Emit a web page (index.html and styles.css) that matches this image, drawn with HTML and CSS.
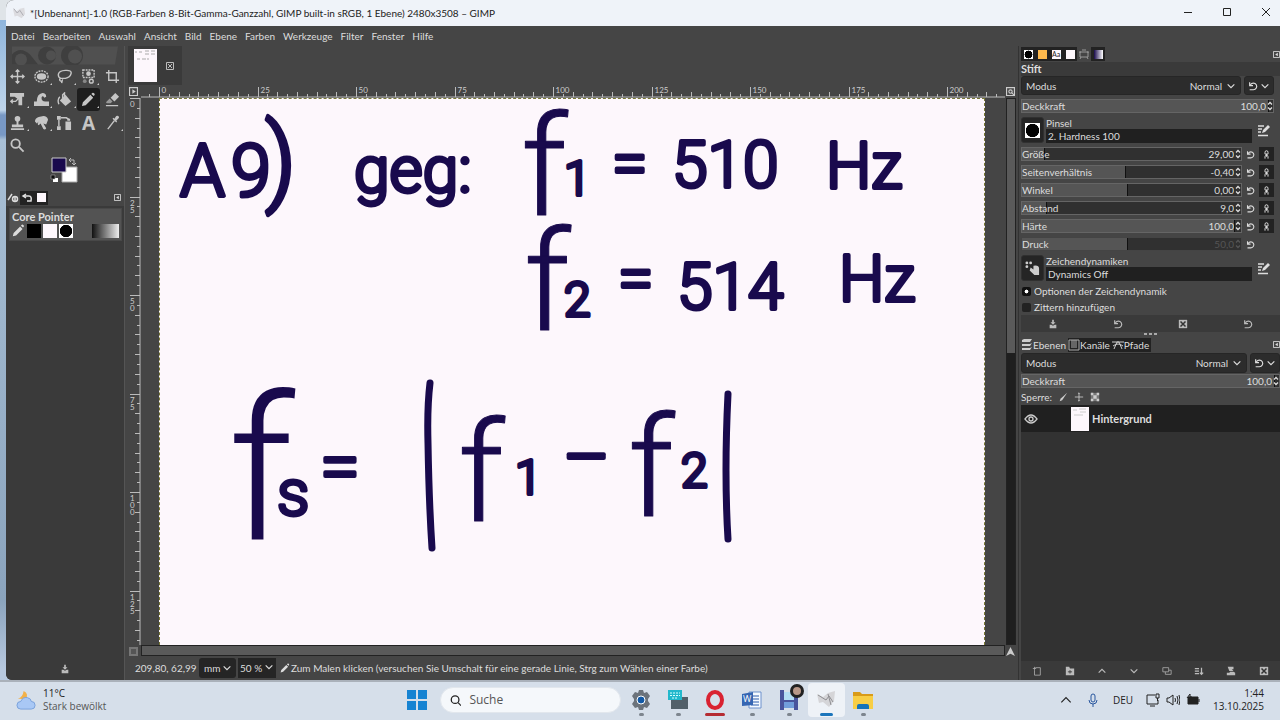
FILE: index.html
```
<!DOCTYPE html>
<html lang="de">
<head>
  <meta charset="UTF-8">
  <title>*[Unbenannt]-1.0 – GIMP</title>
  <link rel="stylesheet" href="styles.css">
</head>
<body>
  <!-- mehrfach verwendete Icons -->
  <svg class="defs">
    <symbol id="reset" viewBox="0 0 12 12"><path d="M2 10.500h4.500a4 4 0 1 0-3.500-6M2 1.500v4h4" fill="none" stroke="currentColor" stroke-width="1.400"/></symbol>
    <symbol id="down" viewBox="0 0 12 12"><path d="M2 4l4 4 4-4" fill="none" stroke="currentColor" stroke-width="1.400"/></symbol>
    <symbol id="up" viewBox="0 0 12 12"><path d="M2 8l4-4 4 4" fill="none" stroke="currentColor" stroke-width="1.400"/></symbol>
    <symbol id="spin" viewBox="0 0 6 12"><path d="M1 4.500l2-2 2 2M1 7.500l2 2 2-2" fill="none" stroke="currentColor" stroke-width="1.300"/></symbol>
    <symbol id="link" viewBox="0 0 12 12"><path d="M4 5.500V3a2 2 0 0 1 4 0v2.500H4zM4 11.500V9a2 2 0 0 1 4 0v2.500M6 5v4" fill="none" stroke="currentColor" stroke-width="1.300"/></symbol>
    <symbol id="edit" viewBox="0 0 14 14"><path d="M1 3h6M1 6h4M1 9h3M1 12.500h10" stroke="currentColor" stroke-width="1.300"/><path d="M5 10l1-3 5-5 2 2-5 5z" fill="currentColor"/></symbol>
    <symbol id="menu" viewBox="0 0 8 8"><path d="M.5.5h7v7h-7z" fill="none" stroke="currentColor"/><path d="M5.500 2v4l-3-2z" fill="currentColor"/></symbol>
    <symbol id="pencil" viewBox="0 0 16 16"><path d="M1 15l1-4 8-8 3 3-8 8zM11 2l1-1q1-.6 2 .3t.5 2l-1 1z" fill="currentColor"/></symbol>
    <symbol id="cross" viewBox="0 0 12 12"><path d="M1 1h10v10H1z" fill="currentColor"/><path d="M3 3l6 6M9 3l-6 6" stroke="#333" stroke-width="1.800"/></symbol>
    <symbol id="save" viewBox="0 0 12 12"><path d="M5 1h2v3h2L6 7 3 4h2zM2 7h2l2 1 2-1h2v4H2z" fill="currentColor"/></symbol>
  </svg>

  <div class="window">
    <header class="titlebar">
      <svg class="app-icon" viewBox="0 0 16 16"><path d="M1 3l4 3 4-3 5-1 1 7-4 5-5-3-3 1z" fill="#dcdce0"/><path d="M2 3l4 5 3-3 4 6" stroke="#a5a5ac" fill="none"/></svg>
      <h1>*[Unbenannt]-1.0 (RGB-Farben 8-Bit-Gamma-Ganzzahl, GIMP built-in sRGB, 1 Ebene) 2480x3508 – GIMP</h1>
      <div class="caption">
        <button aria-label="Minimieren"><svg viewBox="0 0 10 10"><path d="M1 5.500h8"/></svg></button>
        <button aria-label="Maximieren"><svg viewBox="0 0 10 10"><path d="M1.500 1.500h7v7h-7z"/></svg></button>
        <button aria-label="Schließen"><svg viewBox="0 0 10 10"><path d="M1 1l8 8M9 1L1 9"/></svg></button>
      </div>
    </header>

    <nav class="menubar">
      <button>Datei</button><button>Bearbeiten</button><button>Auswahl</button><button>Ansicht</button><button>Bild</button><button>Ebene</button><button>Farben</button><button>Werkzeuge</button><button>Filter</button><button>Fenster</button><button>Hilfe</button>
    </nav>

    <main class="workspace">
      <!-- Werkzeugkasten -->
      <aside class="toolbox">
        <svg class="wilber" viewBox="0 0 106 18"><path d="M0 0h106l-3 18H0z" fill="#505050"/><g fill="#3f3f3f"><path d="M0 18V8q8-9 18 0l8 10z"/><circle cx="35" cy="9" r="9"/><circle cx="60" cy="9" r="11"/></g><g fill="#505050"><circle cx="9" cy="13" r="6"/><circle cx="39" cy="9" r="5"/><circle cx="63" cy="10" r="7"/></g></svg>
        <div class="tools">
          <button aria-label="Verschieben"><svg viewBox="0 0 16 16"><path d="M8 1v14M1 8h14M6 3l2-2 2 2M6 13l2 2 2-2M3 6L1 8l2 2M13 6l2 2-2 2" class="line"/></svg></button>
          <button class="more" aria-label="Auswahl"><svg viewBox="0 0 16 16"><ellipse cx="8" cy="8" rx="5" ry="3.500" fill="currentColor"/><ellipse cx="8" cy="8" rx="7" ry="6" class="line dotted"/></svg></button>
          <button class="more" aria-label="Freie Auswahl"><svg viewBox="0 0 16 16"><path d="M4 10Q1 9 1.500 5.500T9 1.500t6 3.500-6 5H4.500a1.500 1.500 0 1 0 1 2.500L5 15" class="line"/></svg></button>
          <button class="more" aria-label="Zauberstab"><svg viewBox="0 0 16 16"><path d="M2 1h12v8H2z" class="line dotted"/><circle cx="8" cy="5" r="2.500" fill="currentColor"/><circle cx="4" cy="13" r="2" fill="#888"/><circle cx="11" cy="13" r="2" class="line"/></svg></button>
          <button aria-label="Zuschneiden"><svg viewBox="0 0 16 16"><path d="M4 1v11h11M1 4h11v11" class="line"/></svg></button>
          <button class="more" aria-label="Transformation"><svg viewBox="0 0 16 16"><path d="M0 1h15v4h-2v9h-4V8L5 5H0z" fill="currentColor"/><path d="M1 10h5l3-3M3 8l-2 2 2 2" class="line"/></svg></button>
          <button class="more" aria-label="Warpen"><svg viewBox="0 0 16 16"><path d="M0 15v-5h3q0-8 6-9 4 0 4 4l-2 1q-2-3-3 0 0 4 4 4h4v5z" fill="currentColor"/></svg></button>
          <button class="more" aria-label="Füllen"><svg viewBox="0 0 16 16"><path d="M9 3l6 7-6 5-6-6z" fill="currentColor"/><path d="M8 9V1L6 3v4M3 5q-3 3-1 8" class="line"/></svg></button>
          <button class="more active" aria-label="Stift"><svg viewBox="0 0 16 16"><use href="#pencil"/></svg></button>
          <button aria-label="Radierer"><svg viewBox="0 0 16 16"><path d="M11 1l4 4-5 5-4-4z" fill="currentColor"/><path d="M5 7l3 3-2 2H2l-1-1z" fill="#999"/><path d="M1 14.500h13" class="line"/></svg></button>
          <button class="more" aria-label="Klonen"><svg viewBox="0 0 16 16"><circle cx="8" cy="4" r="3" fill="currentColor"/><path d="M7 6h2v4h5v3H2v-3h5zM1 14h14v2H1z" fill="currentColor"/></svg></button>
          <button class="more" aria-label="Verschmieren"><svg viewBox="0 0 16 16"><path d="M1 7q0-4 4-5l5-1q4 0 5 4l-2 5-3-1 3 5q-1 2-3 1L7 9 5 11Q3 10 5 7L3 9z" fill="currentColor"/></svg></button>
          <button aria-label="Pfade"><svg viewBox="0 0 16 16"><path d="M0 1h4v4H0zM0 12h4v4H0zM9 7h6v9H9zM11 4h3v2h-3z" fill="currentColor"/><path d="M2 5v7M4 3h6l3 2" class="line"/></svg></button>
          <button aria-label="Text"><b>A</b></button>
          <button class="more" aria-label="Farbpipette"><svg viewBox="0 0 16 16"><path d="M10 4l2-3q3-1 3 2l-3 3 1 1-1 1-4-4 1-1z" fill="currentColor"/><path d="M10 6l-7 9" class="line"/></svg></button>
          <button aria-label="Vergrößerung"><svg viewBox="0 0 16 16"><circle cx="6" cy="6" r="4.500" class="line thick"/><path d="M9.500 9.500l5 5" class="line thick"/></svg></button>
        </div>
        <svg class="colors" viewBox="0 0 28 26"><path d="M11 10h15v15H11z" fill="#fff" stroke="#aaa"/><path d="M1 1h14v14H1z" fill="#190a4d" stroke="#ccc"/><path d="M2 21h5v4H2z" fill="#fff"/><path d="M0 18h4v4H0z" fill="#111" stroke="#aaa" stroke-width=".6"/><path d="M18 3h5v5M20 1l-2 2 2 2M21 6l2 2 2-2" fill="none" stroke="#bbb"/></svg>
        <div class="tabs pointer-tabs">
          <button aria-label="Gerätestatus"><svg viewBox="0 0 12 12"><path d="M1 8l4-6M8 5v4" class="line"/><circle cx="8" cy="7" r="2.500" class="line"/></svg></button>
          <button class="dark" aria-label="Journal"><svg viewBox="0 0 12 12"><path d="M5 2L2 4l3 2M2 4h6q3 0 2 5H6" class="line"/></svg></button>
          <button class="dark" aria-label="Bilder"><i class="swatch white"></i></button>
          <svg class="menu-icon"><use href="#menu"/></svg>
        </div>
        <section class="pointer">
          <h2>Core Pointer</h2>
          <div class="pointer-row">
            <svg class="icon"><use href="#pencil"/></svg>
            <i class="box black"></i><i class="box white"></i><i class="box brush"></i><i class="box gradient"></i>
          </div>
        </section>
        <svg class="icon toolbox-save"><use href="#save"/></svg>
      </aside>

      <!-- Bildfenster -->
      <section class="document">
        <div class="doc-tabs">
          <div class="doc-tab">
            <svg class="thumb" viewBox="0 0 23 33"><path d="M0 0h23v33H0z" fill="#fdf7fc"/><path d="M1 3h2M5 3h3M11 2h4M17 2h4M11 5h4M17 5h4M3 10h3M8 10h4M13 10h2" stroke="#aaa" stroke-width="1"/></svg>
            <button aria-label="Tab schließen"><svg viewBox="0 0 8 8"><path d="M.5.5h7v7h-7zM2 2l4 4M6 2L2 6"/></svg></button>
          </div>
        </div>
        <div class="view">
          <svg class="corner" viewBox="0 0 8 8"><path d="M.5.5h7v7h-7z" fill="none" stroke="#ccc"/><path d="M3 2v4l3-2z" fill="#ccc"/></svg>
          <svg class="ruler-h" id="rulerH"></svg>
          <svg class="corner" viewBox="0 0 8 8"><path d="M.5.5h7v7h-7z" fill="none" stroke="#ccc"/><circle cx="4" cy="4" r="1.500" fill="none" stroke="#ccc"/><path d="M5 5l2 2" stroke="#ccc"/></svg>
          <svg class="ruler-v" id="rulerV"></svg>
          <div class="canvas">
            <svg class="drawing">
              <g class="hand">
                <text x="20" y="97" class="s72">A</text>
                <text x="71" y="97" class="s72">9</text>
                <text x="105" y="94" class="s96">)</text>
                <text x="194" y="93" class="s64">geg:</text>
                <text x="361" y="116" class="s140">f</text>
                <text x="404" y="96" class="s48">1</text>
                <text x="452" y="86" class="s64">=</text>
                <text x="512" y="88" class="s64">510</text>
                <text x="666" y="89" class="s64">Hz</text>
                <text x="364" y="231" class="s140">f</text>
                <text x="404" y="217" class="s48">2</text>
                <text x="458" y="201" class="s64">=</text>
                <text x="517" y="210" class="s64">514</text>
                <text x="679" y="202" class="s64">Hz</text>
                <text x="68" y="440" class="s200">f</text>
                <text x="117" y="416" class="s64">s</text>
                <text x="160" y="392" class="s72">=</text>
                <text x="298" y="422" class="s140">f</text>
                <text x="355" y="395" class="s48">1</text>
                <text x="403" y="383" class="s72">–</text>
                <text x="468" y="417" class="s140">f</text>
                <text x="521" y="388" class="s48">2</text>
              </g>
              <path d="M270 284q-3 25-2 60 1 60 4 105M568 295q-4 80 0 145" class="bar"/>
            </svg>
          </div>
          <div class="scroll-v"></div>
          <i class="quickmask"></i>
          <div class="scroll-h"></div>
          <svg class="corner" viewBox="0 0 8 8"><path d="M4 0l4 8-4-2-4 2z" fill="#ccc"/></svg>
        </div>
        <footer class="status">
          <output>209,80, 62,99</output>
          <select class="unit" aria-label="Einheit"><option>mm</option></select>
          <div class="zoom"><input type="text" value="50 %" aria-label="Zoom"><button aria-label="Zoomstufen"><svg class="icon"><use href="#down"/></svg></button></div>
          <svg class="icon"><use href="#pencil"/></svg>
          <span>Zum Malen klicken (versuchen Sie Umschalt für eine gerade Linie, Strg zum Wählen einer Farbe)</span>
        </footer>
      </section>

      <!-- Docks rechts -->
      <aside class="dock">
        <section class="options">
          <div class="tabs">
            <button class="dark" aria-label="Pinsel"><i class="swatch brush"></i></button>
            <button class="dark" aria-label="Muster"><i class="swatch orange"></i></button>
            <button class="dark" aria-label="Schriften"><i class="swatch white">Aa</i></button>
            <button class="dark" aria-label="Bilder"><i class="swatch white"></i></button>
            <button aria-label="Werkzeugeinstellungen"><svg viewBox="0 0 12 12"><path d="M2 4h8v5H2zM1 4h2M9 4h2M4 2h4M3 9l-1 2M9 9l1 2" fill="none" stroke="#999"/></svg></button>
            <button class="dark" aria-label="Verläufe"><i class="swatch violet"></i></button>
            <svg class="menu-icon"><use href="#menu"/></svg>
          </div>
          <h2>Stift</h2>
          <div class="body">
            <div class="mode"><div class="combo"><label for="mode">Modus</label><select id="mode"><option>Normal</option></select></div><button class="combo-reset" aria-label="Modusgruppe"><svg class="icon"><use href="#reset"/></svg><svg class="icon"><use href="#down"/></svg></button></div>
            <div class="spin full" style="--fill:98%"><label for="opacity">Deckkraft</label><input id="opacity" type="text" value="100,0"><svg><use href="#spin"/></svg></div>
            <div class="resource">
              <button class="preview" aria-label="Pinsel wählen"><i class="box brush"></i></button>
              <div class="field"><label for="brush">Pinsel</label><input id="brush" type="text" value="2. Hardness 100"></div>
              <button class="edit" aria-label="Pinsel bearbeiten"><svg><use href="#edit"/></svg></button>
            </div>
            <div class="row"><div class="spin" style="--fill:10%"><label for="size">Größe</label><input id="size" type="text" value="29,00"><svg><use href="#spin"/></svg></div><button aria-label="Zurücksetzen"><svg class="icon"><use href="#reset"/></svg></button><button class="link" aria-label="Verknüpfen"><svg class="icon"><use href="#link"/></svg></button></div>
            <div class="row"><div class="spin" style="--fill:47%"><label for="aspect">Seitenverhältnis</label><input id="aspect" type="text" value="-0,40"><svg><use href="#spin"/></svg></div><button aria-label="Zurücksetzen"><svg class="icon"><use href="#reset"/></svg></button><button class="link" aria-label="Verknüpfen"><svg class="icon"><use href="#link"/></svg></button></div>
            <div class="row"><div class="spin" style="--fill:48%"><label for="angle">Winkel</label><input id="angle" type="text" value="0,00"><svg><use href="#spin"/></svg></div><button aria-label="Zurücksetzen"><svg class="icon"><use href="#reset"/></svg></button><button class="link" aria-label="Verknüpfen"><svg class="icon"><use href="#link"/></svg></button></div>
            <div class="row"><div class="spin" style="--fill:11%"><label for="spacing">Abstand</label><input id="spacing" type="text" value="9,0"><svg><use href="#spin"/></svg></div><button aria-label="Zurücksetzen"><svg class="icon"><use href="#reset"/></svg></button><button class="link" aria-label="Verknüpfen"><svg class="icon"><use href="#link"/></svg></button></div>
            <div class="row"><div class="spin" style="--fill:97%"><label for="hardness">Härte</label><input id="hardness" type="text" value="100,0"><svg><use href="#spin"/></svg></div><button aria-label="Zurücksetzen"><svg class="icon"><use href="#reset"/></svg></button><button class="link" aria-label="Verknüpfen"><svg class="icon"><use href="#link"/></svg></button></div>
            <div class="row"><div class="spin disabled" style="--fill:48%"><label for="force">Druck</label><input id="force" type="text" value="50,0" disabled><svg><use href="#spin"/></svg></div><button aria-label="Zurücksetzen"><svg class="icon"><use href="#reset"/></svg></button><i class="blank"></i></div>
            <div class="resource">
              <button class="preview" aria-label="Dynamik wählen"><svg viewBox="0 0 16 16"><path d="M6 7l3 2V5q6-1 6 3v7h-5l-5-5z" fill="#ccc"/><g fill="#ccc"><circle cx="2" cy="2" r="1.500"/><circle cx="6" cy="2" r="1.500"/><circle cx="2" cy="6" r="1.500"/></g></svg></button>
              <div class="field"><label for="dynamics">Zeichendynamiken</label><input id="dynamics" type="text" value="Dynamics Off"></div>
              <button class="edit" aria-label="Dynamik bearbeiten"><svg><use href="#edit"/></svg></button>
            </div>
            <label class="check"><input type="checkbox" class="expander" checked>Optionen der Zeichendynamik</label>
            <label class="check"><input type="checkbox">Zittern hinzufügen</label>
          </div>
          <div class="actions">
            <button aria-label="Speichern"><svg class="icon"><use href="#save"/></svg></button>
            <button aria-label="Wiederherstellen"><svg class="icon"><use href="#reset"/></svg></button>
            <button aria-label="Löschen"><svg class="icon"><use href="#cross"/></svg></button>
            <button aria-label="Zurücksetzen"><svg class="icon"><use href="#reset"/></svg></button>
          </div>
        </section>
        <div class="grip"><i></i><i></i><i></i></div>
        <section class="layers">
          <div class="tabs">
            <button><svg viewBox="0 0 12 12"><path d="M1 1l2-1h8l-2 3H1zM1 5h8l2-1-2 3H1zM1 9h8l2-1-2 3H1z" fill="#ccc"/></svg>Ebenen</button>
            <button class="dark"><svg viewBox="0 0 12 12"><path d="M1 1h10v10H1zM4 1v8M6 1v8M8 1v8" fill="none" stroke="#aaa"/></svg>Kanäle</button>
            <button class="dark"><svg viewBox="0 0 12 12"><path d="M0 3h12M2 10l3-7h2l3 7M1 7q5-4 10 0" fill="none" stroke="#ccc"/></svg>Pfade</button>
            <svg class="menu-icon"><use href="#menu"/></svg>
          </div>
          <div class="mode"><div class="combo"><label for="lmode">Modus</label><select id="lmode"><option>Normal</option></select></div><button class="combo-reset" aria-label="Modusgruppe"><svg class="icon"><use href="#reset"/></svg><svg class="icon"><use href="#down"/></svg></button></div>
          <div class="spin full" style="--fill:98%"><label for="lopacity">Deckkraft</label><input id="lopacity" type="text" value="100,0"><svg><use href="#spin"/></svg></div>
          <div class="lock">Sperre:
            <button aria-label="Pixel sperren"><svg viewBox="0 0 12 12"><path d="M2 11l1-3 8-7-6 9z" fill="#ccc"/></svg></button>
            <button aria-label="Position sperren"><svg viewBox="0 0 12 12"><path d="M6 1v10M1 6h10M5 2l1-1 1 1M5 10l1 1 1-1" fill="none" stroke="#ccc"/></svg></button>
            <button aria-label="Alpha sperren"><svg viewBox="0 0 12 12"><path d="M1 1h10v10H1z" fill="#777"/><path d="M1 1h3v3h4V1h3v3H8v4h3v3H8V8H4v3H1V8h3V4H1z" fill="#ccc"/></svg></button>
          </div>
          <div class="layer">
            <svg class="eye" viewBox="0 0 14 10"><path d="M1 5q6-8 12 0-6 8-12 0z" fill="none" stroke="#ccc" stroke-width="1.300"/><circle cx="7" cy="5" r="2" fill="none" stroke="#ccc" stroke-width="1.300"/></svg>
            <svg class="layer-thumb" viewBox="0 0 18 24"><path d="M0 0h18v24H0z" fill="#fdf7fc"/><path d="M2 3h4M8 2h7M9 5h6M3 8h9" stroke="#ccc"/></svg>
            <b>Hintergrund</b>
          </div>
          <div class="layer-space"></div>
          <div class="actions">
            <button aria-label="Neue Ebene"><svg viewBox="0 0 12 12"><path d="M4 2h6v9H3V5M1 3h4M3 1v4" fill="none" stroke="#aaa"/></svg></button>
            <button aria-label="Neue Gruppe"><svg viewBox="0 0 12 12"><path d="M1 1h4l1 2h5v8H1z" fill="#bbb"/><path d="M3.500 7h5M6 5v4" fill="none" stroke="#333"/></svg></button>
            <button aria-label="Nach oben"><svg class="icon"><use href="#up"/></svg></button>
            <button aria-label="Nach unten"><svg class="icon"><use href="#down"/></svg></button>
            <button aria-label="Duplizieren"><svg viewBox="0 0 12 12"><path d="M1 2h7v5H1zM4 7v3h7V5H8" fill="none" stroke="#aaa"/></svg></button>
            <button aria-label="Zusammenfügen"><svg viewBox="0 0 12 12"><path d="M1 3h5M1 6h5M1 9h5M9 2v8M7 8l2 2 2-2" fill="none" stroke="#bbb" stroke-width="1.500"/></svg></button>
            <button aria-label="Maske"><svg viewBox="0 0 12 12"><path d="M2 1h7v3H7l2 2H4zM1 8h3l1-1h4l2 1v3H1z" fill="#bbb"/></svg></button>
            <button aria-label="Löschen"><svg class="icon"><use href="#cross"/></svg></button>
          </div>
        </section>
      </aside>
    </main>
  </div>

  <footer class="taskbar">
    <button class="weather">
      <svg viewBox="0 0 22 22"><path d="M8 1q6 3 2 9l-8-1Q7 8 8 1z" fill="#f2b14a"/><path d="M5 20a4 4 0 0 1 0-8q2-5 7-4 4 1 4 4a4 4 0 0 1 0 8z" fill="#a9c8f5" stroke="#789fda"/></svg>
      <span>11°C<small>Stark bewölkt</small></span>
    </button>
    <div class="apps">
      <button aria-label="Start"><svg viewBox="0 0 20 20"><path d="M0 0h9v9H0zM11 0h9v9h-9zM0 11h9v9H0zM11 11h9v9h-9z" fill="#1683d2"/></svg></button>
      <label class="search"><svg viewBox="0 0 14 14"><circle cx="6" cy="6" r="4.500"/><path d="M9.500 9.500L13 13"/></svg><input type="text" placeholder="Suche" aria-label="Suche"></label>
      <button class="run" aria-label="Einstellungen"><svg viewBox="0 0 20 20"><path d="M8 0h4l1 3 3-1 3 4-2 3v2l2 3-3 4-3-1-1 3H8l-1-3-3 1-3-4 2-3V9L1 6l3-4 3 1z" fill="#6c737b"/><circle cx="10" cy="10" r="4" fill="#1359a5" stroke="#fff"/></svg></button>
      <button class="run" aria-label="Bildschirmtastatur"><svg viewBox="0 0 20 20"><path d="M3 7h17v12H3z" fill="#52606a"/><path d="M0 0h14v10H0z" fill="#22b8cc"/><path d="M2 3h10M2 5.500h10M4 8h6" stroke="#d8ffff" stroke-dasharray="2 1"/></svg></button>
      <button class="run red" aria-label="Opera"><svg viewBox="0 0 20 20"><ellipse cx="10" cy="10" rx="7" ry="8" fill="none" stroke="#d92231" stroke-width="4"/></svg></button>
      <button class="run" aria-label="Word"><svg viewBox="0 0 20 20"><path d="M7 2h12v16H7z" fill="#f5faff" stroke="#6d91cc"/><path d="M11 6h6M11 9h6M11 12h6M9 15h8" stroke="#2c5cac"/><path d="M0 4l11-2v13L0 16z" fill="#3566b3"/><text x="1" y="12" font-size="9" fill="#fff">W</text></svg></button>
      <button class="run" aria-label="Editor"><svg viewBox="0 0 20 20"><path d="M1 0h4v8h10V0h4v20h-4v-4H5v4H1z" fill="#49539c"/><path d="M5 2h10v8H5z" fill="#b4dcf4"/><path d="M5 12h10v6H5z" fill="#719ddb"/></svg><i class="badge"></i></button>
      <button class="run current" aria-label="GIMP"><svg viewBox="0 0 20 20"><path d="M1 4l6 3 5-4 7-2-1 10-5 6-6-5-4 1z" fill="#d5d5d8"/><path d="M2 5l8 5 3-4 4 6M12 4l3 11" stroke="#8e8e92" fill="none"/></svg></button>
      <button class="run" aria-label="Explorer"><svg viewBox="0 0 20 20"><path d="M0 2h7l2 2h11v15H0z" fill="#d99b19"/><path d="M0 6h20v13H0z" fill="#f8ce45"/><path d="M4 19v-3q0-2 2-2h8q2 0 2 2v3z" fill="#1673b8"/></svg></button>
    </div>
    <div class="tray">
      <button aria-label="Ausgeblendete Symbole"><svg viewBox="0 0 12 12"><path d="M2 8l4-4 4 4"/></svg></button>
      <button class="mic" aria-label="Mikrofon"><svg viewBox="0 0 14 14"><path d="M7 1q2 0 2 2v4q0 2-2 2T5 7V3q0-2 2-2zM3 7q0 4 4 4t4-4M7 11v3"/></svg></button>
      <button class="lang">DEU</button>
      <button class="system" aria-label="Netzwerk, Lautstärke, Akku">
        <svg viewBox="0 0 14 14"><path d="M9 2H1v9h11V7M4 13h5M10 1h3v4h-3zM11.500 5v3"/></svg>
        <svg viewBox="0 0 14 14"><path d="M1 5h2l4-3v10L3 9H1zM9 5q1 2 0 4M11 3q2 4 0 8M13 2q2 5 0 10"/></svg>
        <svg viewBox="0 0 14 14"><path d="M2 4h10v7H2z" fill="#222"/><path d="M13 6v3M1 5l3-4v3h2L2 8"/></svg>
      </button>
      <time>1:44<br>13.10.2025</time>
    </div>
  </footer>
  <script src="rulers.js"></script>
</body>
</html>
```
FILE: styles.css
```
* {
  box-sizing: border-box;
}
body {
  margin: 0;
  height: 100vh;
  display: flex;
  flex-direction: column;
  background: linear-gradient(#dfe4e8 20px, #8fb5dc 20px, #bfd5ea 110px, #7898c4 115px, #7898c4 135px, #a9c0d6 140px, #8ba4bd 600px, #b8c9df 670px);
  font-family: Lato, "Noto Sans", sans-serif;
  font-size: 10px;
  line-height: 14px;
  color: #ddd;
  overflow: hidden;
}
button, input, select {
  font: inherit;
  color: inherit;
  background: none;
  border: 0;
  padding: 0;
  margin: 0;
  border-radius: 0;
}
input {
  min-width: 0;
}
h1, h2 {
  margin: 0;
  font-size: 11px;
}
.defs {
  display: none;
}
.icon {
  width: 10px;
  height: 10px;
  flex: none;
}
.line {
  fill: none;
  stroke: currentColor;
  stroke-width: 1.5;
}
.dotted {
  stroke-dasharray: 2 1;
}
.thick {
  stroke-width: 2;
}

/* Fenster */
.window {
  flex: 1;
  min-height: 0;
  margin-left: 6px;
  display: flex;
  flex-direction: column;
  background: #454545;
  border-radius: 8px 0 0 6px;
  overflow: hidden;
}
.titlebar {
  height: 26px;
  display: flex;
  align-items: center;
  gap: 4px;
  padding-left: 6px;
  background: #eff3f9;
  color: #222;
}
.titlebar h1 {
  flex: 1;
  font-size: 10px;
  font-weight: normal;
}
.app-icon {
  width: 14px;
  height: 14px;
}
.caption {
  display: flex;
  gap: 11px;
}
.caption button {
  width: 28px;
  height: 26px;
}
.caption svg {
  width: 10px;
  height: 10px;
  fill: none;
  stroke: #222;
}
.menubar {
  height: 20px;
  display: flex;
  gap: 8px;
  padding-left: 5px;
}

.workspace {
  flex: 1;
  min-height: 0;
  display: grid;
  grid-template-columns: 118px 1fr 262px;
}

/* Werkzeugkasten */
.toolbox {
  display: flex;
  flex-direction: column;
  background: #3a3a3a;
}
.wilber {
  height: 19px;
  padding: 0 6px;
  background: #454545;
}
.tools {
  display: grid;
  grid-template-columns: repeat(5, 1fr);
  background: #454545;
}
.tools button {
  position: relative;
  height: 23px;
  display: grid;
  place-items: center;
  color: #c6c6c6;
  border-radius: 3px;
}
.tools svg {
  width: 15px;
  height: 15px;
}
.tools b {
  font-family: "Open Sans", sans-serif;
  font-size: 19px;
}
.tools .active {
  background: #1e1e1e;
}
.more::after {
  content: "";
  position: absolute;
  right: 1px;
  bottom: 3px;
  border: 1px solid #ccc;
  border-top-color: transparent;
  border-left-color: transparent;
}
.colors {
  height: 32px;
  padding-bottom: 6px;
  background: #454545;
}
.tabs {
  display: flex;
  align-items: center;
  height: 16px;
}
.tabs button {
  height: 14px;
  min-width: 14px;
  display: flex;
  align-items: center;
  justify-content: center;
}
.tabs button svg {
  width: 12px;
  height: 12px;
}
.dark {
  background: #222;
}
.tabs .menu-icon {
  width: 7px;
  height: 7px;
  margin-left: auto;
}
.pointer-tabs {
  height: 17px;
  padding-right: 3px;
  background: #454545;
}
.swatch {
  width: 9px;
  height: 9px;
  font-size: 7px;
  font-style: normal;
  line-height: 9px;
  color: #222;
}
.white {
  background: #fdf7fc;
}
.black {
  background: #000;
}
.brush {
  background: radial-gradient(circle, #000 60%, #fff 65%);
}
.orange {
  background: #fdb94d;
}
.violet {
  background: linear-gradient(90deg, #190a4d, #fff);
}
.pointer {
  margin: 2px 2px 0 3px;
  padding: 1px 2px;
  height: 33px;
  background: #535353;
  border: 1px solid #484848;
}
.pointer h2 {
  line-height: 13px;
}
.pointer-row {
  display: flex;
  gap: 2px;
  padding-top: 1px;
}
.pointer-row .icon {
  width: 13px;
  height: 13px;
}
.box {
  width: 14px;
  height: 14px;
}
.gradient {
  width: 27px;
  margin-left: auto;
  background: linear-gradient(90deg, #111, #eee);
}
.toolbox-save {
  margin: auto auto 6px;
  color: #bbb;
}

/* Bildfenster */
.document {
  display: flex;
  flex-direction: column;
  min-width: 0;
  padding-left: 3px;
  border-left: 1px solid #555;
}
.doc-tabs {
  height: 39px;
  display: flex;
}
.doc-tab {
  width: 54px;
  display: flex;
  align-items: center;
  gap: 9px;
  padding-left: 6px;
  background: #3a3a3a;
}
.thumb {
  width: 23px;
  height: 33px;
}
.doc-tab button {
  display: flex;
}
.doc-tab button svg {
  width: 8px;
  height: 8px;
  fill: none;
  stroke: #bbb;
}
.view {
  flex: 1;
  min-height: 0;
  display: grid;
  grid-template-columns: 13px 1fr 13px;
  grid-template-rows: 13px 1fr 11px;
}
.corner, .quickmask {
  width: 9px;
  height: 9px;
  margin: 2px 1px;
}
.quickmask {
  border: 2px solid #777;
  background: #555;
}
.ruler-h {
  width: 100%;
  height: 13px;
}
.ruler-v {
  width: 13px;
  height: 100%;
}
.ruler-h text, .ruler-v text {
  font-size: 8px;
  fill: #ccc;
}
.tick {
  stroke: #bbb;
}
.canvas {
  min-height: 0;
  padding: 0 20px 0 18px;
}
.drawing {
  display: block;
  width: 100%;
  height: 100%;
  overflow: visible;
  background: #fdf7fc;
  border: 1px dashed #777733;
  border-bottom: 0;
}
.hand {
  font-family: Roboto, "Liberation Sans", sans-serif;
  font-weight: 300;
  fill: #190a4d;
  stroke: #190a4d;
  stroke-width: 4;
  stroke-linejoin: round;
}
.s48 { font-size: 48px; }
.s64 { font-size: 64px; }
.s72 { font-size: 72px; }
.s96 { font-size: 96px; }
.s140 { font-size: 140px; stroke-width: 1; }
.s200 { font-size: 200px; stroke-width: 0; }
.bar {
  fill: none;
  stroke: #190a4d;
  stroke-width: 7;
  stroke-linecap: round;
}
.scroll-v {
  width: 10px;
  margin-left: 1px;
  background: linear-gradient(#5a5a5a 254px, #1f1f1f 254px);
  border: 1px solid #222;
}
.scroll-h {
  background: #5a5a5a;
  border: 1px solid #222;
}
.status {
  height: 24px;
  display: flex;
  align-items: center;
  padding-left: 7px;
  white-space: nowrap;
}
.status output {
  width: 64px;
}
select {
  appearance: none;
  background: url("data:image/svg+xml,%3Csvg xmlns='http://www.w3.org/2000/svg' viewBox='0 0 12 12'%3E%3Cpath d='M2 4l4 4 4-4' fill='none' stroke='%23ddd' stroke-width='1.400'/%3E%3C/svg%3E") no-repeat right 4px center / 10px;
}
.status .unit {
  width: 37px;
  height: 20px;
  padding-left: 5px;
  background-color: #252525;
  border-radius: 3px;
}
.zoom {
  display: flex;
  width: 38px;
  height: 20px;
  margin: 0 2px;
  background: #252525;
}
.zoom input {
  width: 26px;
  padding-left: 2px;
}
.status > .icon {
  margin: 0 1px 0 2px;
}

/* Docks */
.dock {
  min-width: 0;
  display: flex;
  flex-direction: column;
  padding-left: 2px;
  background: #454545;
  border-left: 1px solid #333;
}
.options h2 {
  height: 14px;
  background: #3a3a3a;
}
.body {
  display: flex;
  flex-direction: column;
  gap: 4px;
  padding-right: 6px;
}
.mode {
  display: flex;
  gap: 3px;
  height: 20px;
}
.body .mode {
  height: 19px;
}
.combo, .combo-reset {
  display: flex;
  align-items: center;
  background: #2c2c2c;
  border: 1px solid #262626;
  border-radius: 3px;
}
.combo {
  flex: 1;
  padding-left: 4px;
}
.combo select {
  flex: 1;
  padding-right: 18px;
  text-align-last: right;
}
.combo-reset {
  width: 30px;
  justify-content: space-evenly;
}
.spin {
  flex: 1;
  min-width: 0;
  height: 14px;
  display: flex;
  align-items: center;
  border: 1px solid #656565;
  background: linear-gradient(90deg, #555 var(--fill), #111 var(--fill), #111 calc(var(--fill) + 1px), #303030 calc(var(--fill) + 1px));
}
.spin.full {
  flex: none;
}
.spin input {
  flex: 1;
  width: 0;
  height: 12px;
  text-align: right;
}
.spin svg {
  width: 6px;
  height: 12px;
  margin-left: 1px;
}
.spin.disabled {
  border-color: #444;
}
.spin.disabled input, .spin.disabled svg {
  color: #555;
}
.row {
  display: flex;
  gap: 1px;
}
.row button, .blank {
  flex: none;
  width: 15px;
  height: 14px;
  display: grid;
  place-items: center;
}
.row .icon {
  width: 9px;
  height: 9px;
}
.row .link {
  background: #222;
}
.resource {
  display: flex;
  align-items: center;
  gap: 2px;
  height: 26px;
}
.preview {
  width: 23px;
  height: 26px;
  display: grid;
  place-items: center;
  background: #252525;
  border: 1px solid #303030;
  border-radius: 3px;
}
.preview .box, .preview svg {
  width: 15px;
  height: 15px;
}
.field {
  flex: 1;
  display: flex;
  flex-direction: column;
}
.field label {
  line-height: 12px;
}
.field input {
  height: 14px;
  padding-left: 2px;
  background: #202020;
}
.edit {
  width: 20px;
}
.edit svg {
  width: 14px;
  height: 14px;
  vertical-align: bottom;
}
.check {
  display: flex;
  align-items: center;
  gap: 3px;
  height: 12px;
}
.check input {
  appearance: none;
  width: 9px;
  height: 9px;
  margin-left: 1px;
  background: #222;
  border-radius: 2px;
}
.check .expander {
  background: radial-gradient(circle, #fff 25%, #111 35%);
}
.actions {
  display: flex;
  height: 19px;
  background: #3a3a3a;
}
.actions button {
  flex: 1;
  display: grid;
  place-items: center;
  color: #bbb;
}
.actions svg {
  width: 10px;
  height: 10px;
}
.options .actions {
  height: 17px;
  margin-top: 2px;
}
.grip {
  height: 4px;
  display: flex;
  justify-content: center;
  align-items: center;
  gap: 2px;
}
.grip i {
  width: 3px;
  height: 2px;
  background: #aaa;
}
.layers {
  flex: 1;
  display: flex;
  flex-direction: column;
}
.layers .tabs {
  height: 17px;
}
.layers .spin {
  margin-top: 1px;
}
.layers .tabs button {
  padding-right: 2px;
}
.lock {
  height: 17px;
  display: flex;
  align-items: center;
  gap: 6px;
}
.lock button {
  display: flex;
}
.lock svg {
  width: 10px;
  height: 10px;
}
.layer {
  height: 27px;
  display: flex;
  align-items: center;
  background: #202020;
  font-size: 11px;
}
.eye {
  width: 14px;
  height: 10px;
  margin: 0 33px 0 3px;
}
.layer-thumb {
  width: 18px;
  height: 24px;
  margin-right: 3px;
}
.layer-space {
  flex: 1;
  background: #323232;
}

/* Taskleiste */
.taskbar {
  height: 40px;
  display: grid;
  grid-template-columns: 1fr auto 1fr;
  align-items: center;
  padding: 0 16px 2px;
  background: #d6dfea;
  border-top: 2px solid #aab1ba;
  color: #222;
  font-family: "Open Sans", "Noto Sans", sans-serif;
}
.weather {
  display: flex;
  align-items: center;
  gap: 6px;
  text-align: left;
  line-height: 13px;
}
.weather svg {
  width: 21px;
  height: 21px;
}
.weather small {
  display: block;
  font-size: 10px;
  color: #555;
}
.apps {
  display: flex;
  align-items: center;
}
.apps button {
  position: relative;
  width: 37px;
  height: 34px;
  display: grid;
  place-items: center;
}
.apps button svg {
  width: 20px;
  height: 20px;
}
.search {
  width: 181px;
  height: 26px;
  display: flex;
  align-items: center;
  gap: 8px;
  margin: 0 2px 0 4px;
  padding: 0 9px;
  background: #f5f8fb;
  border: 1px solid #e2e7ed;
  border-radius: 13px;
  font-size: 12px;
}
.search svg {
  width: 13px;
  height: 13px;
  fill: none;
  stroke: #222;
  stroke-width: 1.5;
}
.search input::placeholder {
  color: #555;
}
.run::after {
  content: "";
  position: absolute;
  bottom: 1px;
  width: 5px;
  height: 3px;
  border-radius: 2px;
  background: #7d858e;
}
.run.red::after {
  width: 20px;
  background: #b52c32;
}
.run.current {
  background: #eef2f7;
  border-radius: 4px;
}
.run.current::after {
  width: 13px;
  background: #1b75bb;
}
.badge {
  position: absolute;
  top: 1px;
  right: 4px;
  width: 14px;
  height: 14px;
  border: 3px solid #222;
  border-radius: 50%;
  background: #b99888;
}
.tray {
  display: flex;
  align-items: center;
  justify-content: flex-end;
  gap: 13px;
}
.tray svg {
  width: 14px;
  height: 14px;
  fill: none;
  stroke: #222;
}
.tray button {
  display: flex;
  gap: 6px;
}
.mic svg {
  stroke: #28569e;
}
.tray time {
  line-height: 13px;
  text-align: right;
}
```
FILE: rulers.js
```
// Lineale: 1 mm in Pixeln bei 50 %, Teilstriche alle 2,5 mm
const PX_PER_MM = 3.94;
const ORIGIN_X = 18;

function add(parent, tag, attrs, text) {
  const el = document.createElementNS("http://www.w3.org/2000/svg", tag);
  for (const key in attrs) el.setAttribute(key, attrs[key]);
  if (text) el.textContent = text;
  parent.appendChild(el);
  return el;
}

function drawRuler(svg, vertical) {
  const box = svg.getBoundingClientRect();
  const length = vertical ? box.height : box.width;
  const origin = vertical ? 0 : ORIGIN_X;

  const edge = vertical ? { x1: 12, y1: 0, x2: 12, y2: length } : { x1: 0, y1: 12, x2: length, y2: 12 };
  add(svg, "line", { ...edge, class: "tick" });

  for (let i = -1; i * 2.5 * PX_PER_MM + origin < length; i++) {
    const pos = Math.round(origin + i * 2.5 * PX_PER_MM) + 0.5;
    const major = i % 10 === 0;
    const start = major ? 2 : i % 2 === 0 ? 7 : 9;
    const line = vertical ? { x1: start, y1: pos, x2: 12, y2: pos } : { x1: pos, y1: start, x2: pos, y2: 12 };
    add(svg, "line", { ...line, class: "tick" });
    if (!major) continue;
    const label = String(i * 2.5);
    if (vertical) {
      // Ziffern untereinander
      const text = add(svg, "text", {});
      [...label].forEach((digit, n) => add(text, "tspan", { x: 2, y: pos + 8 + n * 7 }, digit));
    } else {
      add(svg, "text", { x: pos + 2, y: 8 }, label);
    }
  }
}

drawRuler(document.getElementById("rulerH"), false);
drawRuler(document.getElementById("rulerV"), true);
```
